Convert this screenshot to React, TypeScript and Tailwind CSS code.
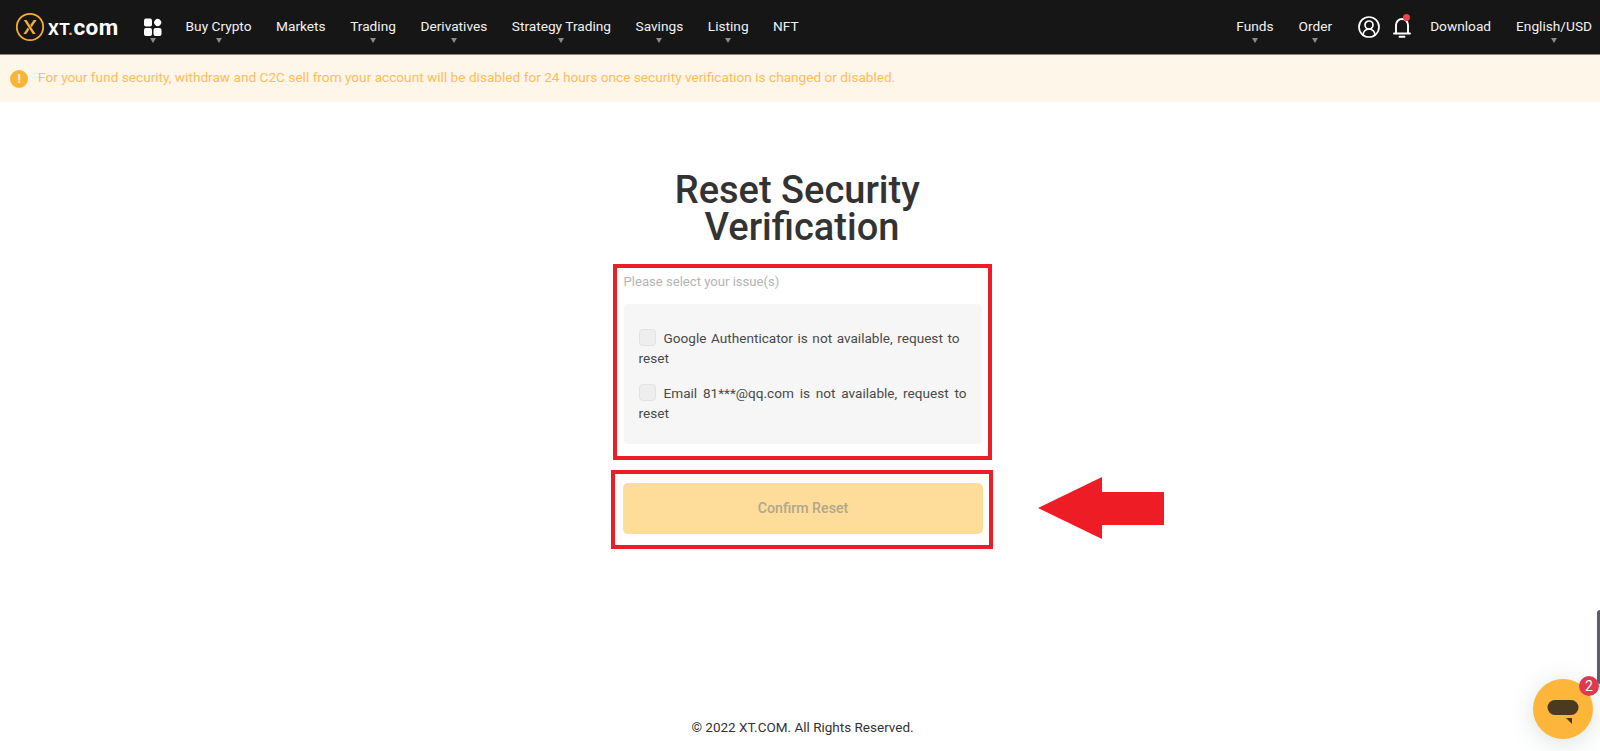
import React from "react";
import { CircleUserRound } from "lucide-react";

const leftNav = [
  { label: "Buy Crypto", caret: true },
  { label: "Markets", caret: false },
  { label: "Trading", caret: true },
  { label: "Derivatives", caret: true },
  { label: "Strategy Trading", caret: true },
  { label: "Savings", caret: true },
  { label: "Listing", caret: true },
  { label: "NFT", caret: false },
];

const Caret = () => (
  <span className="absolute left-1/2 top-[38px] -ml-[3px] h-0 w-0 border-x-[3.5px] border-t-[5px] border-x-transparent border-t-[#8a8a8a]" />
);

const NavItem = ({ label, caret }: { label: string; caret: boolean }) => (
  <div className="relative flex h-[54px] items-center whitespace-nowrap pb-[1px] text-[13.7px] text-[#f2f2f2]">
    {label}
    {caret && <Caret />}
  </div>
);

const Logo = () => (
  <div className="flex items-center">
    <svg width="30" height="30" viewBox="0 0 30 30" fill="none">
      <circle cx="15" cy="15" r="13.2" stroke="#f5ac37" strokeWidth="1.8" />
      <path d="M8.8 8h2.8l9 14h-2.8z" fill="#f5ac37" />
      <path d="M21.6 8h-2.9l-3.5 5 1.5 2.2zM8.4 22h2.9l3-4.4-1.5-2.2z" fill="#f5ac37" />
    </svg>
    <span className="ml-[3px] text-[17px] font-bold leading-none tracking-[0.4px] text-white">
      XT<span className="text-[#f5ac37]">.</span>
      <span className="text-[22.5px]">com</span>
    </span>
  </div>
);

const GridIcon = () => (
  <div className="relative flex h-[54px] items-center">
    <svg width="18" height="18" viewBox="0 0 18 18" fill="#fff">
      <rect x="0" y="0.5" width="8" height="8" rx="2" />
      <rect x="10.2" y="1" width="7" height="7" rx="3.5" transform="rotate(45 13.7 4.5)" />
      <rect x="0" y="10" width="8" height="8" rx="2" />
      <rect x="9.5" y="10" width="8" height="8" rx="2" />
    </svg>
    <Caret />
  </div>
);

const Bell = () => (
  <div className="relative ml-[12px] flex h-[54px] w-[18px] items-center">
    <svg width="18" height="22" viewBox="0 0 18 22" fill="none" stroke="#fff" strokeWidth="1.9">
      <path d="M3 17V9a6 6 0 0 1 12 0v8" />
      <path d="M1 17.5h16" strokeLinecap="round" />
      <path d="M6.5 20.8h5" strokeLinecap="round" />
    </svg>
    <span className="absolute left-[10px] top-[14px] h-[7px] w-[7px] rounded-full bg-[#f0444c]" />
  </div>
);

const Header = () => (
  <header className="flex h-[55px] items-center justify-between border-b border-[#8d8678] bg-[#161616] pl-[15px] pr-[8px]">
    <div className="flex items-center">
      <Logo />
      <div className="ml-[25px]">
        <GridIcon />
      </div>
      <nav className="ml-[24px] flex items-center gap-[24.5px]">
        {leftNav.map((item) => (
          <NavItem key={item.label} label={item.label} caret={item.caret} />
        ))}
      </nav>
    </div>
    <div className="flex items-center">
      <NavItem label="Funds" caret />
      <div className="ml-[25px]">
        <NavItem label="Order" caret />
      </div>
      <CircleUserRound className="ml-[25px] h-[24px] w-[24px] text-white" strokeWidth={1.7} />
      <Bell />
      <div className="ml-[19px]">
        <NavItem label="Download" caret={false} />
      </div>
      <div className="ml-[25px]">
        <NavItem label="English/USD" caret />
      </div>
    </div>
  </header>
);

const Notice = () => (
  <div className="flex h-[47px] items-center bg-[#fff6ea] pl-[10px] text-[13.65px] text-[#ffbd59]">
    <span className="flex h-[18px] w-[18px] items-center justify-center rounded-full bg-[#fbb536] text-[12px] font-bold text-white">
      !
    </span>
    <span className="mb-[3px] ml-[10px]">
      For your fund security, withdraw and C2C sell from your account will be disabled for 24 hours once security verification is changed or disabled.
    </span>
  </div>
);

const Issue = ({ text, pad }: { text: string; pad: string }) => (
  <label className={`block text-justify text-[13.6px] leading-[20px] text-[#4a4a4a] ${pad}`}>
    <span className="mr-[8px] inline-block h-[17px] w-[17px] rounded-[4px] border border-[#e2e2e2] bg-[#eeeeee] align-[-3px]" />
    {text}
  </label>
);

const ChatButton = () => (
  <div className="absolute left-[1533px] top-[679px] flex h-[60px] w-[60px] items-center justify-center rounded-full bg-[#fdb53a] shadow-[0_4px_24px_rgba(60,90,90,0.18)]">
    <svg width="32" height="26" viewBox="0 0 32 26" fill="#4a3a20" className="mt-[5px]">
      <rect x="0.5" y="1" width="31" height="15" rx="7.5" />
      <path d="M19 19l6 0v6z" />
    </svg>
    <span className="absolute -right-[6px] -top-[3px] flex h-[20px] w-[20px] items-center justify-center rounded-full bg-[#dd3a50] text-[14px] text-white">
      2
    </span>
  </div>
);

export default function App() {
  return (
    <div className="relative h-[751px] overflow-hidden bg-white font-['Roboto',sans-serif]">
      <Header />
      <Notice />

      <main className="ml-[4px] flex flex-col items-center">
        <h1 className="mt-[70px] w-[260px] text-center text-[38px] font-medium leading-[37px] text-[#333333]">
          Reset Security{"\u00a0"} Verification
        </h1>

        <section className="mt-[18px] h-[196px] w-[379px] border-4 border-[#ee1c25] pl-[7px] pr-[6px] pt-[4px]">
          <p className="text-[13.1px] leading-[20px] text-[#b4b4b4]">Please select your issue(s)</p>
          <div className="mt-[12px] flex h-[140px] flex-col gap-[15px] rounded-[4px] bg-[#f6f6f6] px-[15px] pt-[24px]">
            <Issue text="Google Authenticator is not available, request to reset" pad="pr-[7px]" />
            <Issue text="Email 81***@qq.com is not available, request to reset" pad="" />
          </div>
        </section>

        <section className="mt-[10px] h-[79px] w-[382px] border-4 border-[#ee1c25] pl-[8px] pr-[6px] pt-[9px]">
          <button className="flex h-[51px] w-full items-center justify-center rounded-[5px] bg-[#fedd9b] text-[14.2px] font-medium text-[#b0a78d]">
            Confirm Reset
          </button>
        </section>
      </main>

      <svg className="absolute left-[1038px] top-[477px]" width="128" height="62" viewBox="0 0 128 62" fill="#ee1c25">
        <path d="M0 31L64 0V15H126V48H64V62Z" />
      </svg>

      <footer className="absolute inset-x-0 top-[717px] ml-[5px] text-center text-[13.5px] leading-[20px] text-[#333333]">
        © 2022 XT.COM. All Rights Reserved.
      </footer>

      <div className="absolute right-0 top-[610px] h-[74px] w-[3px] rounded-l bg-[#5a5f6b]" />
      <ChatButton />
    </div>
  );
}
